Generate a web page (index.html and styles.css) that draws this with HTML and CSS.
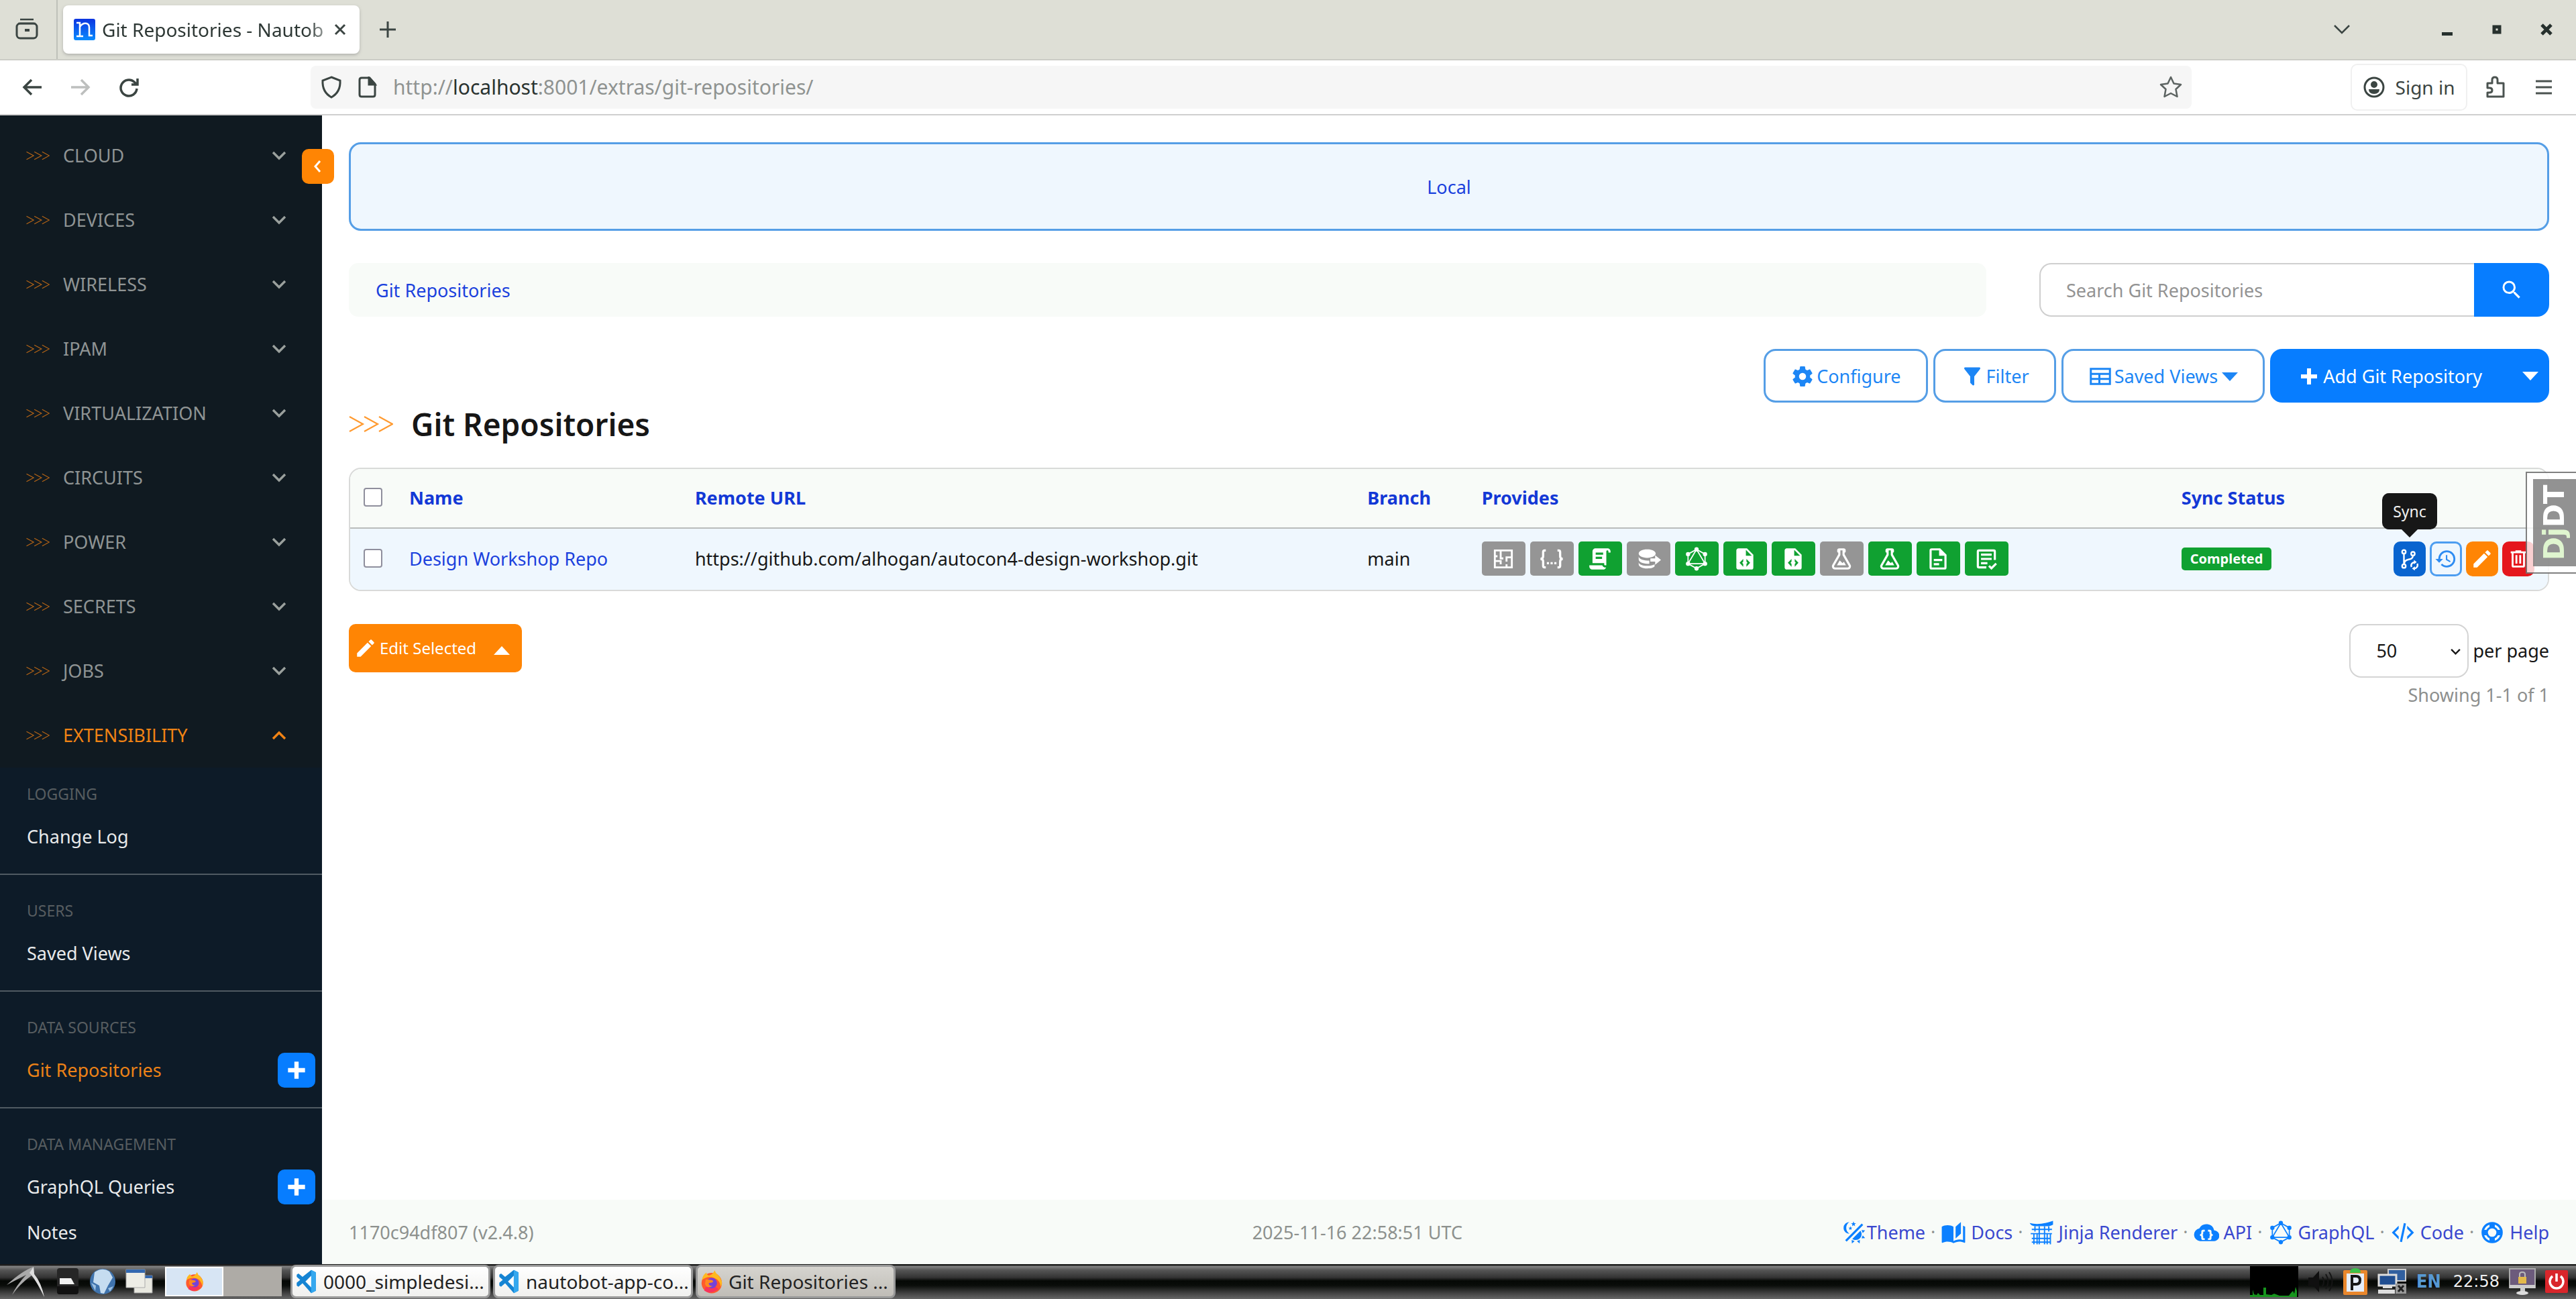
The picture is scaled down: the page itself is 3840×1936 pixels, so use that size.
FILE: index.html
```html
<!DOCTYPE html>
<html lang="en">
<head>
<meta charset="utf-8">
<title>Git Repositories - Nautobot</title>
<link rel="stylesheet" href="styles.css">
</head>
<body>
<svg class="defs" aria-hidden="true">
  <symbol id="chev3" viewBox="0 0 66 26"><path d="M1 2L21 13 1 24M23 2L43 13 23 24M45 2L65 13 45 24" fill="none" stroke="currentColor" stroke-width="2.2"/></symbol>
  <symbol id="down" viewBox="0 0 24 24"><path d="M3 7l9 9 9-9" fill="none" stroke="currentColor" stroke-width="3.4"/></symbol>
  <symbol id="up" viewBox="0 0 24 24"><path d="M3 17l9-9 9 9" fill="none" stroke="currentColor" stroke-width="3.4"/></symbol>
  <symbol id="plus" viewBox="0 0 24 24"><path d="M20 14H14V20H10V14H4V10H10V4H14V10H20V14Z"/></symbol>
  <symbol id="magnify" viewBox="0 0 24 24"><path d="M9.5,3A6.5,6.5 0 0,1 16,9.5C16,11.11 15.41,12.59 14.44,13.73L14.71,14H15.5L20.5,19L19,20.5L14,15.5V14.71L13.73,14.44C12.59,15.41 11.11,16 9.5,16A6.5,6.5 0 0,1 3,9.5A6.5,6.5 0 0,1 9.5,3M9.5,5C7,5 5,7 5,9.5C5,12 7,14 9.5,14C12,14 14,12 14,9.5C14,7 12,5 9.5,5Z"/></symbol>
  <symbol id="cog" viewBox="0 0 24 24"><path d="M12,15.5A3.5,3.5 0 0,1 8.5,12A3.5,3.5 0 0,1 12,8.5A3.5,3.5 0 0,1 15.5,12A3.5,3.5 0 0,1 12,15.5M19.43,12.97C19.47,12.65 19.5,12.33 19.5,12C19.5,11.67 19.47,11.34 19.43,11L21.54,9.37C21.73,9.22 21.78,8.95 21.66,8.73L19.66,5.27C19.54,5.05 19.27,4.96 19.05,5.05L16.56,6.05C16.04,5.66 15.5,5.32 14.87,5.07L14.5,2.42C14.46,2.18 14.25,2 14,2H10C9.75,2 9.54,2.18 9.5,2.42L9.13,5.07C8.5,5.32 7.96,5.66 7.44,6.05L4.95,5.05C4.73,4.96 4.46,5.05 4.34,5.27L2.34,8.73C2.21,8.95 2.27,9.22 2.46,9.37L4.57,11C4.53,11.34 4.5,11.67 4.5,12C4.5,12.33 4.53,12.65 4.57,12.97L2.46,14.63C2.27,14.78 2.21,15.05 2.34,15.27L4.34,18.73C4.46,18.95 4.73,19.03 4.95,18.95L7.44,17.94C7.96,18.34 8.5,18.68 9.13,18.93L9.5,21.58C9.54,21.82 9.75,22 10,22H14C14.25,22 14.46,21.82 14.5,21.58L14.87,18.93C15.5,18.67 16.04,18.34 16.56,17.94L19.05,18.95C19.27,19.03 19.54,18.95 19.66,18.73L21.66,15.27C21.78,15.05 21.73,14.78 21.54,14.63L19.43,12.97Z"/></symbol>
  <symbol id="filter" viewBox="0 0 24 24"><path d="M14,12V19.88C14.04,20.18 13.94,20.5 13.71,20.71C13.32,21.1 12.69,21.1 12.3,20.71L10.29,18.7C10.06,18.47 9.96,18.16 10,17.87V12H9.97L4.21,4.62C3.87,4.19 3.95,3.56 4.38,3.22C4.57,3.08 4.78,3 5,3V3H19V3C19.22,3 19.43,3.08 19.62,3.22C20.05,3.56 20.13,4.19 19.79,4.62L14.03,12H14Z"/></symbol>
  <symbol id="views" viewBox="0 0 24 24"><path d="M2.500 4.500h19v15h-19zM2.500 9.500h19M2.500 14.500h19M11 9.500v10" fill="none" stroke="currentColor" stroke-width="2"/></symbol>
  <symbol id="pencil" viewBox="0 0 24 24"><path d="M20.71,7.04C21.1,6.65 21.1,6 20.71,5.63L18.37,3.29C18,2.9 17.35,2.9 16.96,3.29L15.12,5.12L18.87,8.87M3,17.25V21H6.75L17.81,9.93L14.06,6.18L3,17.25Z"/></symbol>
  <symbol id="trash" viewBox="0 0 24 24"><path d="M9,3V4H4V6H5V19A2,2 0 0,0 7,21H17A2,2 0 0,0 19,19V6H20V4H15V3H9M7,6H17V19H7V6M9,8V17H11V8H9M13,8V17H15V8H13Z"/></symbol>
  <symbol id="history" viewBox="0 0 24 24"><path d="M13.5,8H12V13L16.28,15.54L17,14.33L13.5,12.25V8M13,3A9,9 0 0,0 4,12H1L4.96,16.03L9,12H6A7,7 0 0,1 13,5A7,7 0 0,1 20,12A7,7 0 0,1 13,19C11.07,19 9.32,18.21 8.06,16.94L6.64,18.36C8.27,20 10.5,21 13,21A9,9 0 0,0 22,12A9,9 0 0,0 13,3"/></symbol>
  <symbol id="sync" viewBox="0 0 24 24"><g fill="none" stroke="currentColor" stroke-width="1.700"><circle cx="6" cy="4.500" r="1.900"/><circle cx="6" cy="19.500" r="1.900"/><circle cx="15.500" cy="6.500" r="1.900"/><path d="M6 6.500v11M15.500 8.500c0 3-2 3.500-4.500 4S6.500 14 6.300 17"/><path d="M14 20.500a3.500 3.500 0 0 1 3.500-5M20 17a3.500 3.500 0 0 1-3.500 5"/></g><path d="M16.500 13l3 2.300-3 2.300zM17.500 24.300l-3-2.300 3-2.300z"/></symbol>
  <symbol id="floor" viewBox="0 0 24 24"><path d="M4 4h16v16H4zM4 9.500h2.500M9.500 4v7.500H12M4 14h5.500v3M9.500 19.500V20M15 20v-3M15 14.500v-4h5" fill="none" stroke="currentColor" stroke-width="1.800"/></symbol>
  <symbol id="json" viewBox="0 0 24 24"><path d="M6.500 4H5.500Q4 4 4 5.500V9.500Q4 12 1.500 12Q4 12 4 14.500V18.500Q4 20 5.500 20H6.500M17.500 4H18.500Q20 4 20 5.500V9.500Q20 12 22.500 12Q20 12 20 14.500V18.500Q20 20 18.500 20H17.500" fill="none" stroke="currentColor" stroke-width="2.100"/><path d="M7.500 15h2v2h-2zM11 15h2v2h-2zM14.500 15h2v2h-2z"/></symbol>
  <symbol id="script" viewBox="0 0 24 24"><path d="M17.8,20C17.4,21.2 16.3,22 15,22H5C3.3,22 2,20.7 2,19V18H5L14.2,18C14.6,19.2 15.7,20 17,20H17.8M19,2C20.7,2 22,3.3 22,5V6H20V5C20,4.400 19.6,4 19,4C18.4,4 18,4.400 18,5V18H17C16.4,18 16,17.6 16,17V16H5V5C5,3.3 6.3,2 8,2H19M8,6V8H15V6H8M8,10V12H14V10H8Z"/></symbol>
  <symbol id="database" viewBox="0 0 24 24"><path d="M11 3c-4.500 0-8 1.700-8 4s3.500 4 8 4 8-1.700 8-4-3.500-4-8-4zM3 9.500v3c0 2.200 3.500 4 8 4h2v-3h-2c-4.500 0-8-1.800-8-4zM3 15v2c0 2.200 3.500 4 8 4s6-.8 7-2v-2c-1.500 1-4 1.500-7 1.500-4.500 0-8-1.300-8-3.500zM18.500 8.500L24 13l-5.500 4.500V14.500H14v-3h4.500z"/></symbol>
  <symbol id="graphql" viewBox="0 0 24 24"><path d="M12 3l8 4.500v9L12 21l-8-4.500v-9zM12 3L4 16.500h16z" fill="none" stroke="currentColor" stroke-width="1.100"/><circle cx="12" cy="3" r="2"/><circle cx="20" cy="7.500" r="2"/><circle cx="20" cy="16.500" r="2"/><circle cx="12" cy="21" r="2"/><circle cx="4" cy="16.500" r="2"/><circle cx="4" cy="7.500" r="2"/></symbol>
  <symbol id="filecode" viewBox="0 0 24 24"><path d="M13,9H18.5L13,3.5V9M6,2H14L20,8V20A2,2 0 0,1 18,22H6C4.890,22 4,21.1 4,20V4C4,2.890 4.890,2 6,2M10.500,12L7,15.700L10.500,19.400V16.800L9.500,15.700L10.500,14.600V12M13.500,12V14.600L14.500,15.700L13.500,16.800V19.400L17,15.700L13.500,12Z"/></symbol>
  <symbol id="flask" viewBox="0 0 24 24"><path d="M5,19A1,1 0 0,0 6,20H18A1,1 0 0,0 19,19C19,18.79 18.93,18.59 18.82,18.43L13,8.35V4H11V8.35L5.18,18.43C5.07,18.59 5,18.79 5,19M6,22A3,3 0 0,1 3,19C3,18.4 3.18,17.84 3.5,17.37L9,7.81V6A1,1 0 0,1 8,5V4A2,2 0 0,1 10,2H14A2,2 0 0,1 16,4V5A1,1 0 0,1 15,6V7.81L20.5,17.37C20.82,17.84 21,18.4 21,19A3,3 0 0,1 18,22H6M13,16L14.34,14.66L16.27,18H7.73L10.39,13.39L13,16Z"/></symbol>
  <symbol id="doc" viewBox="0 0 24 24"><path d="M6,2A2,2 0 0,0 4,4V20A2,2 0 0,0 6,22H18A2,2 0 0,0 20,20V8L14,2H6M6,4H13V9H18V20H6V4M8,12V14H16V12H8M8,16V18H13V16H8Z"/></symbol>
  <symbol id="check" viewBox="0 0 24 24"><path d="M12 20H5q-1 0-1-1V5q0-1 1-1h14q1 0 1 1v8M7 8h10M7 12h10M7 16h6M14.500 18.500l2.300 2.300 4.500-4.500" fill="none" stroke="currentColor" stroke-width="2"/></symbol>
  <symbol id="theme" viewBox="0 0 24 24"><path d="M7.5,2C5.71,3.15 4.5,5.18 4.5,7.5C4.5,9.82 5.71,11.85 7.53,13C4.46,13 2,10.54 2,7.5A5.5,5.5 0 0,1 7.5,2M19.07,3.5L20.5,4.93L4.93,20.5L3.5,19.07L19.07,3.5M12.89,5.93L11.41,5L9.97,6L10.39,4.3L9,3.24L10.75,3.12L11.33,1.47L12,3.1L13.73,3.13L12.38,4.26L12.89,5.93M9.59,9.54L8.43,8.81L7.31,9.59L7.65,8.27L6.56,7.44L7.92,7.35L8.37,6.06L8.88,7.33L10.24,7.36L9.19,8.23L9.59,9.54M19,13.5A5.5,5.5 0 0,1 13.5,19C12.28,19 11.15,18.6 10.24,17.93L17.93,10.24C18.6,11.15 19,12.28 19,13.5M14.6,20.08L17.37,18.93L17.13,22.28L14.6,20.08M18.93,17.38L20.08,14.61L22.28,17.15L18.93,17.38M20.08,12.42L18.94,9.64L22.28,9.88L20.08,12.42M9.63,18.93L12.4,20.08L9.87,22.27L9.63,18.93Z"/></symbol>
  <symbol id="book" viewBox="0 0 24 24"><path d="M19 2L14 6.5V17.5L19 13V2M6.5 5C4.55 5 2.45 5.4 1 6.5V21.16C1 21.41 1.25 21.66 1.5 21.66C1.6 21.66 1.65 21.59 1.75 21.59C3.1 20.94 5.05 20.5 6.5 20.5C8.45 20.5 10.55 20.9 12 22C13.35 21.15 15.8 20.5 17.5 20.5C19.15 20.5 20.85 20.81 22.25 21.56C22.35 21.61 22.4 21.59 22.5 21.59C22.75 21.59 23 21.34 23 21.09V6.5C22.4 6.05 21.75 5.75 21 5.5V19C19.9 18.65 18.7 18.5 17.5 18.5C15.8 18.5 13.35 19.15 12 20V6.5C10.55 5.4 8.45 5 6.5 5Z"/></symbol>
  <symbol id="jinja" viewBox="0 0 24 24"><path d="M1 3q9 2.500 22-2v3.500q-2 1.200-5 1.500H6Q2.500 5.800 1 3z"/><path d="M3 9h19M6 6v5M10 6v17M15 6v17M19 6v5M2 13h20M5 13v10M8 13v10M17.500 13v10M20.500 13v10M3 17.500h18M3 21h18" fill="none" stroke="currentColor" stroke-width="1.200"/></symbol>
  <symbol id="api" viewBox="0 0 24 24"><path d="M19.350 10A7.500 7.500 0 0 0 5.400 8.100 6 6 0 0 0 6 20H19a5 5 0 0 0 .350-10zM10.500 11H9.700q-.7 0-.7.800v1.400q0 1-1 1 1 0 1 1v1.300q0 .8.700.8h.8v1.700H9q-1.800 0-1.800-1.800v-1.200q0-1-1.200-1v-1.500q1.200 0 1.200-1.100v-1.200Q7.200 9.300 9 9.300h1.500zM18 15q-1.200 0-1.200 1v1.200q0 1.800-1.800 1.800h-1.500v-1.700h.8q.7 0 .7-.8v-1.300q0-1 1-1-1 0-1-1v-1.400q0-.8-.7-.8h-.8V9.300H15q1.800 0 1.800 1.800v1.200q0 1.200 1.200 1.200z" fill-rule="evenodd"/></symbol>
  <symbol id="xml" viewBox="0 0 24 24"><path d="M12.890,3L14.85,3.4L11.11,21L9.15,20.6L12.890,3M19.59,12L16,8.41V5.58L22.42,12L16,18.41V15.58L19.59,12M1.58,12L8,5.58V8.41L4.41,12L8,15.58V18.41L1.58,12Z"/></symbol>
  <symbol id="help" viewBox="0 0 24 24"><path d="M12 2a10 10 0 1 0 0 20 10 10 0 0 0 0-20zm0 6a4 4 0 1 1 0 8 4 4 0 0 1 0-8zM9.500 4.500v2.100a6 6 0 0 0-2.900 2.900H4.500a8 8 0 0 1 5-5zm5 0a8 8 0 0 1 5 5h-2.100a6 6 0 0 0-2.900-2.900zM4.500 14.500h2.100a6 6 0 0 0 2.900 2.900v2.100a8 8 0 0 1-5-5zm12.900 0h2.100a8 8 0 0 1-5 5v-2.100a6 6 0 0 0 2.900-2.900z" fill-rule="evenodd"/></symbol>
  <symbol id="vscode" viewBox="0 0 36 44"><path d="M26 2l8 4v32l-8 4-15-17-7 6-3-2v-5l6-5L1 14v-4l3-2 7 6z" fill="#1584d3"/><path d="M26 12v20L16 22z" fill="#fff"/><path d="M26 2l8 4v32l-8 4z" fill="#35a8ef"/></symbol>
  <symbol id="firefox" viewBox="0 0 32 32"><circle cx="16" cy="18" r="13.500" fill="#ff5a2c"/><path d="M3 14Q4 7 9 4q0 3 3 4 5-1 8-7 1 4 5 7 7 8 3 15-1-9-9-12-9-3-16 3z" fill="#ffb81f"/><path d="M6 28q9 6 19-2l-4-3H8z" fill="#f7335d"/><circle cx="16" cy="18" r="7" fill="#7542d8"/><path d="M8 13l8 1q3 1 1 3l-5 1q0 4 5 4-7 4-10-3z" fill="#ff8a1f"/></symbol>
</svg>

<header class="chrome">
  <div class="tabs">
    <button class="cell history-view" aria-label="View recent"><svg width="36" height="36" viewBox="0 0 36 36" fill="none" stroke="#3b4542" stroke-width="3"><path d="M8 3h20M5 9h26" stroke-width="2.500"/><rect x="3" y="9" width="30" height="22" rx="5"/><path d="M15 17h7v4h-7z" fill="#3b4542" stroke="none"/></svg></button>
    <div class="tab"><svg width="32" height="32" viewBox="0 0 32 32"><defs><linearGradient id="nb" x2="0" y2="1"><stop stop-color="#0c34e0"/><stop offset="1" stop-color="#0a8cff"/></linearGradient></defs><rect width="32" height="32" rx="3" fill="url(#nb)"/><path d="M4 6h5v20M4 26h10M9 12q4-6 10-5 4 1 4 6v12h5" fill="none" stroke="#fff" stroke-width="2.500"/></svg><span class="tab-title">Git Repositories - Nautob</span><button class="cell tab-close" aria-label="Close tab"><svg width="18" height="18" viewBox="0 0 18 18"><path d="M2 2l14 14M16 2L2 16" stroke="#3b4542" stroke-width="3"/></svg></button></div>
    <button class="cell new-tab" aria-label="New tab"><svg width="24" height="24" viewBox="0 0 24 24"><path d="M12 0v24M0 12h24" stroke="#3b4542" stroke-width="3"/></svg></button>
    <div class="window-buttons">
      <button class="cell wide" aria-label="List tabs"><svg width="26" height="26" viewBox="0 0 26 26"><path d="M2 7l11 11L24 7" fill="none" stroke="#3b4542" stroke-width="2.500"/></svg></button>
      <button class="cell" aria-label="Minimize"><svg width="18" height="18" viewBox="0 0 18 18"><path d="M1 13h16v5H1z" fill="#26302d"/></svg></button>
      <button class="cell" aria-label="Maximize"><svg width="14" height="14" viewBox="0 0 14 14"><path d="M3 3h8v8H3z" fill="none" stroke="#26302d" stroke-width="5"/></svg></button>
      <button class="cell" aria-label="Close"><svg width="18" height="18" viewBox="0 0 18 18"><path d="M2 2l14 14M16 2L2 16" stroke="#26302d" stroke-width="5"/></svg></button>
    </div>
  </div>
  <div class="toolbar">
    <div class="nav">
      <button class="cell" aria-label="Back"><svg width="30" height="30" viewBox="0 0 30 30" fill="none" stroke="#3b4542" stroke-width="3.500"><path d="M29 15H3M14 4L3 15l11 11"/></svg></button>
      <button class="cell" aria-label="Forward"><svg width="30" height="30" viewBox="0 0 30 30" fill="none" stroke="#bdbfbe" stroke-width="3.500"><path d="M1 15h26M16 4l11 11-11 11"/></svg></button>
      <button class="cell" aria-label="Reload"><svg width="32" height="32" viewBox="0 0 32 32" fill="none" stroke="#3b4542" stroke-width="3.500"><path d="M28 18a12 12 0 1 1-4-10l4 4M29 3v9h-9"/></svg></button>
    </div>
    <div class="urlbar">
      <svg width="32" height="34" viewBox="0 0 32 34" fill="none" stroke="#3b4542" stroke-width="3"><path d="M16 2L29 7q1 17-13 25Q2 24 3 7z"/></svg>
      <svg width="28" height="32" viewBox="0 0 28 32" fill="none" stroke="#3b4542" stroke-width="3"><path d="M5 2h12l8 9v16q0 3-3 3H5q-3 0-3-3V5q0-3 3-3z"/><path d="M16 2v10h9z" fill="#3b4542"/></svg>
      <span class="url">http://<b>localhost</b>:8001/extras/git-repositories/</span>
      <svg width="34" height="34" viewBox="0 0 34 34" fill="none" stroke="#5c6361" stroke-width="2.500"><path d="M17 2l4.500 9.500L32 13l-7.500 7 2 11-9.500-5-9.500 5 2-11L2 13l10.500-1.500z" stroke-linejoin="round"/></svg>
    </div>
    <div class="actions-bar">
      <button class="signin"><svg width="32" height="32" viewBox="0 0 32 32"><circle cx="16" cy="16" r="14" fill="none" stroke="#3b4542" stroke-width="3"/><circle cx="16" cy="12" r="5" fill="#3b4542"/><path d="M8 19h16q0 7-8 7t-8-7z" fill="#3b4542"/></svg>Sign in</button>
      <button class="cell ext" aria-label="Extensions"><svg width="28" height="34" viewBox="0 0 28 34" fill="none" stroke="#4b5350" stroke-width="3"><path d="M2 11h7V6q0-4 4-4t4 4v5h9v20H2v-6h3q4 0 4-3.500T5 18H2z" stroke-linejoin="round"/></svg></button>
      <button class="cell menu" aria-label="Menu"><svg width="26" height="22" viewBox="0 0 26 22"><path d="M1 2h24M1 11h24M1 20h24" stroke="#4b5350" stroke-width="3"/></svg></button>
    </div>
  </div>
</header>

<div class="app">
  <nav class="sidebar">
    <button class="collapse" aria-label="Collapse menu"><svg width="20" height="20" viewBox="0 0 20 20"><path d="M13 2L6 10l7 8" fill="none" stroke="#fff" stroke-width="3"/></svg></button>
    <button class="section"><svg class="arrows"><use href="#chev3"/></svg>CLOUD<svg class="caret"><use href="#down"/></svg></button>
    <button class="section"><svg class="arrows"><use href="#chev3"/></svg>DEVICES<svg class="caret"><use href="#down"/></svg></button>
    <button class="section"><svg class="arrows"><use href="#chev3"/></svg>WIRELESS<svg class="caret"><use href="#down"/></svg></button>
    <button class="section"><svg class="arrows"><use href="#chev3"/></svg>IPAM<svg class="caret"><use href="#down"/></svg></button>
    <button class="section"><svg class="arrows"><use href="#chev3"/></svg>VIRTUALIZATION<svg class="caret"><use href="#down"/></svg></button>
    <button class="section"><svg class="arrows"><use href="#chev3"/></svg>CIRCUITS<svg class="caret"><use href="#down"/></svg></button>
    <button class="section"><svg class="arrows"><use href="#chev3"/></svg>POWER<svg class="caret"><use href="#down"/></svg></button>
    <button class="section"><svg class="arrows"><use href="#chev3"/></svg>SECRETS<svg class="caret"><use href="#down"/></svg></button>
    <button class="section"><svg class="arrows"><use href="#chev3"/></svg>JOBS<svg class="caret"><use href="#down"/></svg></button>
    <button class="section open"><svg class="arrows"><use href="#chev3"/></svg>EXTENSIBILITY<svg class="caret"><use href="#up"/></svg></button>
    <div class="groups">
      <div class="group"><h2>LOGGING</h2><div class="item"><a href="#">Change Log</a></div></div>
      <div class="group"><h2>USERS</h2><div class="item"><a href="#">Saved Views</a></div></div>
      <div class="group"><h2>DATA SOURCES</h2><div class="item"><a class="current" href="#">Git Repositories</a><button class="add" aria-label="Add Git repository"><svg><use href="#plus"/></svg></button></div></div>
      <div class="group"><h2>DATA MANAGEMENT</h2><div class="item"><a href="#">GraphQL Queries</a><button class="add" aria-label="Add GraphQL query"><svg><use href="#plus"/></svg></button></div><div class="item"><a href="#">Notes</a></div></div>
    </div>
  </nav>

  <main>
    <div class="banner">Local</div>
    <div class="crumb-row">
      <div class="crumbs"><a href="#">Git Repositories</a></div>
      <form class="search"><input type="text" aria-label="Search Git Repositories" placeholder="Search Git Repositories"><button type="button" aria-label="Search"><svg><use href="#magnify"/></svg></button></form>
    </div>
    <div class="buttons">
      <button class="btn"><svg><use href="#cog"/></svg>Configure</button>
      <button class="btn"><svg><use href="#filter"/></svg>Filter</button>
      <button class="btn"><svg><use href="#views"/></svg>Saved Views<i class="tri"></i></button>
      <div class="split"><button class="btn solid"><svg><use href="#plus"/></svg>Add Git Repository</button><button class="more" aria-label="More"><i class="tri"></i></button></div>
    </div>
    <h1><svg><use href="#chev3"/></svg>Git Repositories</h1>

    <div class="panel">
      <table>
        <colgroup><col class="c-check"><col class="c-name"><col class="c-url"><col class="c-branch"><col class="c-provides"><col></colgroup>
        <thead><tr><th><input type="checkbox" aria-label="Select all"></th><th><a href="#">Name</a></th><th><a href="#">Remote URL</a></th><th><a href="#">Branch</a></th><th><a href="#">Provides</a></th><th><a href="#">Sync Status</a></th></tr></thead>
        <tbody><tr>
          <td><input type="checkbox" aria-label="Select Design Workshop Repo"></td>
          <td><a href="#">Design Workshop Repo</a></td>
          <td>https://github.com/alhogan/autocon4-design-workshop.git</td>
          <td>main</td>
          <td><div class="chips">
            <span class="chip off"><svg><use href="#floor"/></svg></span><span class="chip off"><svg><use href="#json"/></svg></span><span class="chip"><svg><use href="#script"/></svg></span><span class="chip off"><svg><use href="#database"/></svg></span><span class="chip"><svg><use href="#graphql"/></svg></span><span class="chip"><svg><use href="#filecode"/></svg></span><span class="chip"><svg><use href="#filecode"/></svg></span><span class="chip off"><svg><use href="#flask"/></svg></span><span class="chip"><svg><use href="#flask"/></svg></span><span class="chip"><svg><use href="#doc"/></svg></span><span class="chip"><svg><use href="#check"/></svg></span>
          </div></td>
          <td><div class="status"><span class="badge">Completed</span>
            <div class="row-actions">
              <span class="tip-anchor"><span class="tooltip" role="tooltip">Sync</span><button class="act sync" aria-label="Sync"><svg><use href="#sync"/></svg></button></span>
              <button class="act log" aria-label="Change log"><svg><use href="#history"/></svg></button>
              <button class="act edit" aria-label="Edit"><svg><use href="#pencil"/></svg></button>
              <button class="act delete" aria-label="Delete"><svg><use href="#trash"/></svg></button>
            </div></div></td>
        </tr></tbody>
      </table>
    </div>

    <div class="below">
      <button class="edit-selected"><svg><use href="#pencil"/></svg>Edit Selected<i class="tri-up"></i></button>
      <div class="paging">
        <div class="per-page"><span class="select-wrap"><select id="per-page"><option>50</option></select><svg><use href="#down"/></svg></span><label for="per-page">per page</label></div>
        <div class="showing">Showing 1-1 of 1</div>
      </div>
    </div>

    <footer>
      <span>1170c94df807 (v2.4.8)</span>
      <span class="date">2025-11-16 22:58:51 UTC</span>
      <div class="links">
        <a class="tight" href="#"><svg><use href="#theme"/></svg>Theme</a><span>·</span><a href="#"><svg><use href="#book"/></svg>Docs</a><span>·</span><a href="#"><svg><use href="#jinja"/></svg>Jinja Renderer</a><span>·</span><a href="#"><svg><use href="#api"/></svg>API</a><span>·</span><a href="#"><svg><use href="#graphql"/></svg>GraphQL</a><span>·</span><a href="#"><svg><use href="#xml"/></svg>Code</a><span>·</span><a href="#"><svg><use href="#help"/></svg>Help</a>
      </div>
    </footer>
  </main>
  <button class="djdt"><span class="djdt-text"><b>Dj</b>DT</span></button>
</div>

<div class="taskbar">
  <div class="launchers">
    <svg width="60" height="48" viewBox="0 0 60 48"><path d="M1 29Q24 8 41 2l1 11q10 12 15 34Q46 24 38 15 20 28 9 44 15 30 30 14 16 21 1 29z" fill="#aaa"/><path d="M41 2l1 11q10 12 15 34Q44 20 35 11z" fill="#dedede"/></svg>
    <svg width="36" height="40" viewBox="0 0 36 40"><rect x="2" y="0" width="32" height="39" rx="4" fill="#262626"/><path d="M6 15h17l5 9H6z" fill="#f1f1f1"/><path d="M2 27h32v8q0 4-4 4H6q-4 0-4-4z" fill="#111"/></svg>
    <svg width="40" height="40" viewBox="0 0 40 40"><circle cx="20" cy="20" r="19" fill="#3f73ad"/><path d="M8 6q12-8 22-1l5 9-7 12-6 12-5-1-2-11-9-5z" fill="#c5dcf0"/><path d="M3 22l7 4-1 8zM28 30l8-3-5 8z" fill="#9cc0e2"/></svg>
    <svg width="42" height="38" viewBox="0 0 42 38"><path d="M13 10h27v26H13z" fill="#e8e8e0" stroke="#999"/><path d="M13 10h27v4H13z" fill="#3468b0"/><path d="M1 1h28v27H1z" fill="#ededE6" stroke="#aaa"/><path d="M1 1h28v5H1z" fill="#3468b0"/></svg>
  </div>
  <div class="pager"><span class="desk active"><svg width="30" height="30"><use href="#firefox"/></svg></span><span class="desk"></span></div>
  <div class="tasks">
    <button class="task"><svg width="36" height="38"><use href="#vscode"/></svg>0000_simpledesi...</button>
    <button class="task"><svg width="36" height="38"><use href="#vscode"/></svg>nautobot-app-co...</button>
    <button class="task current"><svg width="36" height="38"><use href="#firefox"/></svg>Git Repositories ...</button>
  </div>
  <div class="tray">
    <svg width="72" height="46" viewBox="0 0 72 46"><path d="M0 0h72v46H0z" fill="#000"/><path d="M0 46v-3h4v-8l2 7 4 1 2-3 3 3h5V32h4v10l8 1 4-2 8 3h14l3-4 3-3 2 4 2-10 2 6v9z" fill="#16951d"/></svg>
    <svg width="38" height="34" viewBox="0 0 38 34"><path d="M1 11h7l9-10v32L8 23H1z" fill="#101010"/><path d="M22 10q4 7 0 14M27 6q7 11 0 22M32 3q9 14 0 28" fill="none" stroke="#151515" stroke-width="2"/></svg>
    <svg width="38" height="42" viewBox="0 0 38 42"><rect x="1" y="4" width="36" height="37" rx="2" fill="#e9872c"/><path d="M6 9h26v27H6z" fill="#e5eefc"/><path d="M11 8q0-7 8-7t8 7z" fill="#3cc24a"/><path d="M14 34V13h6q6 0 6 6t-6 6h-6" fill="none" stroke="#171717" stroke-width="4"/></svg>
    <svg width="44" height="38" viewBox="0 0 44 38"><path d="M16 1h26v17H16z" fill="#315f9f" stroke="#ccc" stroke-width="2"/><path d="M2 9h26v16H2z" fill="#204e91" stroke="#ddd" stroke-width="3"/><path d="M8 25h14v4H8zM1 31h25v6H1z" fill="#ddd"/><path d="M27 22h16v15H27z" fill="#999"/><path d="M31 25l8 9M39 25l-8 9" stroke="#222" stroke-width="3"/></svg>
    <span class="lang">EN</span>
    <span class="clock">22:58</span>
    <svg width="40" height="42" viewBox="0 0 40 42"><path d="M1 2h38v28H1z" fill="#6c5b7c" stroke="#aaa" stroke-width="2"/><path d="M1 26h38v5H1zM17 31h7v5h-7z" fill="#ccc"/><ellipse cx="20" cy="38" rx="9" ry="3" fill="#ddd"/><path d="M14 14h12v10H14z" fill="#e3b94a"/><path d="M16 14v-4q0-3 4-3t4 3v4" fill="none" stroke="#bbb" stroke-width="2"/></svg>
    <svg width="34" height="34" viewBox="0 0 34 34"><rect width="34" height="34" rx="2" fill="#d9262b"/><path d="M11 9a10 10 0 1 0 12 0M17 5v12" fill="none" stroke="#fff" stroke-width="3.500"/></svg>
  </div>
</div>
</body>
</html>
```
FILE: styles.css
```css
* { box-sizing: border-box; }
body { margin: 0; min-height: 100vh; display: flex; flex-direction: column; font-family: "Noto Sans", "Open Sans", sans-serif; font-size: 27px; line-height: 36px; color: #161616; background: #fff; }
button, input, select { font: inherit; color: inherit; margin: 0; }
button { background: none; border: 0; padding: 0; }
a { color: #1b41dd; text-decoration: none; }
svg { flex: none; display: block; }
svg:not([fill]) { fill: currentColor; }
h1, h2 { margin: 0; }
.defs { position: absolute; width: 0; height: 0; }
.cell { display: flex; align-items: center; justify-content: center; }

/* browser chrome */
.tabs { height: 90px; background: #dedfd6; border-bottom: 2px solid #cbccc6; display: flex; align-items: center; font-size: 28px; color: #2e3835; }
.history-view { width: 86px; height: 88px; padding-right: 5px; border-right: 2px solid #bfc1b9; }
.tab { margin-left: 8px; width: 442px; height: 72px; padding: 0 20px 0 16px; border-radius: 8px; background: #fff; box-shadow: 0 2px 4px #8888; display: flex; align-items: center; gap: 10px; }
.tab-title { flex: 1; min-width: 0; white-space: nowrap; -webkit-mask-image: linear-gradient(to right, #000 91%, #0006); mask-image: linear-gradient(to right, #000 91%, #0006); }
.new-tab { width: 84px; }
.window-buttons { margin-left: auto; display: flex; padding-right: 7px; }
.window-buttons .cell { width: 74px; }
.window-buttons .wide { width: 240px; }
.toolbar { height: 82px; border-bottom: 2px solid #cfcfcf; display: grid; grid-template-columns: 463px 1fr 573px; align-items: center; color: #3b4542; }
.nav { display: flex; padding-left: 12px; }
.nav .cell { width: 72px; }
.urlbar { height: 64px; background: #f6f6f6; border-radius: 8px; display: flex; align-items: center; padding: 0 14px 0 15px; gap: 24px; font-size: 30px; }
.url { flex: 1; color: #8f9391; }
.url b { font-weight: 400; color: #2a3330; }
.actions-bar { display: flex; justify-content: flex-end; align-items: center; padding-right: 18px; font-size: 28px; }
.signin { width: 174px; height: 70px; border: 2px solid #f0f0f0; border-radius: 10px; display: flex; align-items: center; justify-content: center; gap: 16px; }
.ext { width: 84px; }
.menu { width: 60px; }

/* layout */
.app { flex: 1; display: grid; grid-template-columns: 480px 1fr; position: relative; }
.sidebar { position: relative; background: #101a21; padding-top: 12px; display: flex; flex-direction: column; }
.collapse { position: absolute; right: -18px; top: 50px; width: 48px; height: 52px; border-radius: 10px; background: #ff8504; display: flex; align-items: center; justify-content: center; }
.section { width: 100%; height: 96px; padding: 0 52px 0 39px; display: flex; align-items: center; text-align: left; color: #8f9494; }
.section .arrows { width: 35px; height: 14px; margin-right: 20px; color: #b86616; }
.section .caret { width: 24px; height: 24px; margin-left: auto; color: #9aa09d; }
.section.open, .section.open .caret { color: #f08314; }
.groups { flex: 1; background: #0d1b28; }
.group { padding: 35px 20px 21px 40px; border-bottom: 2px solid #4f5a62; }
.group:first-child { padding-top: 21px; }
.group:last-child { border: 0; padding-bottom: 0; }
.group h2 { font-size: 23px; font-weight: 400; color: #575d60; margin-bottom: 12px; }
.item { height: 68px; display: flex; align-items: center; justify-content: space-between; margin-right: -10px; }
.item a { color: #e8eaeb; }
.item a.current { color: #ec8217; }
.add { width: 56px; height: 52px; border-radius: 10px; background: #077dff; color: #fff; display: flex; align-items: center; justify-content: center; }
.add svg { width: 38px; height: 38px; }

main { min-width: 0; padding: 40px 40px 0; display: flex; flex-direction: column; }
.banner { height: 132px; padding-top: 2px; border: 3px solid #559ee6; border-radius: 18px; background: #eff7fe; color: #1b41dd; display: flex; align-items: center; justify-content: center; }
.crumb-row { display: flex; margin-top: 48px; height: 80px; gap: 79px; }
.crumbs { flex: 1; background: #f8fbf8; border-radius: 14px; padding: 2px 40px 0; display: flex; align-items: center; }
.search { width: 760px; display: flex; }
.search input { flex: 1; min-width: 0; border: 2px solid #cfcfcf; border-right: 0; border-radius: 18px 0 0 18px; padding: 2px 38px 0; background: #fff; }
.search input::placeholder { color: #939393; opacity: 1; }
.search button { width: 112px; background: #077dff; color: #fff; border-radius: 0 18px 18px 0; display: flex; align-items: center; justify-content: center; }
.search svg { width: 36px; height: 36px; }
.buttons { margin-top: 48px; display: flex; justify-content: flex-end; gap: 8px; }
.btn { height: 80px; padding: 2px 37px 0; border: 3px solid #559ee6; border-radius: 18px; background: #fff; color: #1d86f5; display: flex; align-items: center; gap: 3px; }
.btn svg { width: 36px; height: 36px; }
.tri { border: 12px solid transparent; border-top: 13px solid currentColor; border-bottom: 0; margin-left: 3px; }
.split { display: flex; background: #077dff; border-radius: 18px; color: #fff; }
.btn.solid { background: none; border-color: transparent; color: #fff; }
.more { width: 60px; display: flex; align-items: center; justify-content: center; }
h1 { font-size: 46px; line-height: 64px; font-weight: 600; display: flex; align-items: center; gap: 27px; margin-bottom: 33px; }
h1 svg { width: 66px; height: 26px; color: #ff9a30; }

/* table */
.panel { border: 2px solid #d9dad9; border-radius: 18px; overflow: hidden; }
table { width: 100%; table-layout: fixed; border-collapse: separate; border-spacing: 0; }
.c-check { width: 72px; }
.c-name { width: 13%; }
.c-url { width: 30.6%; }
.c-branch { width: 5.2%; }
.c-provides { width: 31.84%; }
th, td { padding: 0 16px 2px; text-align: left; white-space: nowrap; }
th { height: 89px; background: #f8fbf8; border-bottom: 2px solid #b9bcbb; font-weight: 700; }
th a { color: #1338d6; }
td { height: 91px; background: #eff7fe; }
th:first-child, td:first-child { padding: 0 0 4px 20px; }
th:last-child, td:last-child { padding-right: 20px; }
input[type="checkbox"] { appearance: none; display: block; width: 28px; height: 28px; border: 2px solid #8f8f9d; border-radius: 4px; background: #fff; }
.chips { display: flex; gap: 7px; }
.chip { width: 65px; height: 51px; border-radius: 5px; background: #10a131; color: #fff; display: flex; align-items: center; justify-content: center; }
.chip.off { background: #959595; }
.chip svg { width: 38px; height: 38px; }
.status { display: flex; align-items: center; justify-content: space-between; }
.badge { height: 34px; padding: 0 13px; border-radius: 5px; background: #10a131; color: #fff; font-size: 20px; line-height: 33px; font-weight: 700; }
.row-actions { display: flex; gap: 6px; }
.tip-anchor { position: relative; }
.act { width: 48px; height: 52px; border-radius: 10px; color: #fff; display: flex; align-items: center; justify-content: center; }
.act svg { width: 34px; height: 34px; }
.sync { background: #0964cf; }
.log { border: 3px solid #4d9df0; color: #2e8cf2; }
.edit { background: #ff8504; }
.delete { background: #e5171d; }
.tooltip { position: absolute; left: -17px; bottom: 70px; width: 82px; height: 54px; border-radius: 10px; background: #171717; color: #f0f0f0; font-size: 23px; line-height: 54px; text-align: center; }
.tooltip::after { content: ""; position: absolute; top: 54px; left: 29px; border: 12px solid transparent; border-top-color: #171717; border-bottom: 0; }

.below { margin: 49px 0 40px; display: flex; justify-content: space-between; align-items: flex-start; }
.edit-selected { height: 72px; padding: 0 18px 0 8px; border-radius: 10px; background: #ff8504; color: #fff; font-size: 24px; display: flex; align-items: center; gap: 4px; }
.edit-selected svg { width: 34px; height: 34px; }
.tri-up { border: 12px solid transparent; border-bottom: 13px solid currentColor; border-top: 0; margin: 6px 0 0 22px; }
.paging { text-align: right; }
.per-page { display: flex; align-items: center; gap: 6px; }
.select-wrap { position: relative; }
.select-wrap select { appearance: none; display: block; width: 178px; height: 80px; border: 2px solid #d4d4d4; border-radius: 18px; background: #fff; padding: 0 38px; }
.select-wrap svg { position: absolute; right: 11px; top: 33px; width: 17px; height: 17px; pointer-events: none; }
.showing { color: #8d8f8e; line-height: 52px; }

footer { margin: auto -40px 0; padding: 2px 40px 0; height: 96px; background: #f8fbf8; color: #8d918e; display: grid; grid-template-columns: 4fr 3fr 5fr; align-items: center; }
.date { text-align: center; }
.links { display: flex; justify-content: flex-end; gap: 8px; }
.links a { display: flex; align-items: center; gap: 7px; color: #3a48cf; white-space: nowrap; }
.links a.tight { gap: 0; }
.links svg { width: 38px; height: 38px; color: #0c80ff; }

.djdt { position: absolute; right: 0; top: 531px; width: 75px; height: 152px; border: 2px solid #1118; border-right: 0; background: #fffc; padding: 9px 0 9px 9px; display: flex; }
.djdt-text { flex: 1; background: #777c; writing-mode: vertical-rl; transform: rotate(180deg); display: flex; align-items: center; justify-content: center; font-family: "DejaVu Sans", sans-serif; font-weight: 700; font-size: 42px; line-height: 64px; color: #fff; }
.djdt-text b { color: #dff5cf; }

/* desktop panel */
.taskbar { height: 52px; background: linear-gradient(#1c1c1c 0 2px, #858585 3px, #555 9px, #333 20px, #050805 25px, #0a0d0a 32px, #454545 44px, #666 52px); display: flex; align-items: center; color: #222; }
.launchers { display: flex; align-items: center; gap: 14px; padding-left: 9px; width: 246px; }
.pager { display: flex; height: 44px; margin-right: 13px; }
.desk { width: 87px; background: #aeaba6; display: flex; align-items: center; justify-content: center; }
.desk.active { background: #d7e5f4; border: 2px solid #fff; }
.tasks { display: flex; gap: 4px; font-size: 28px; }
.task { width: 298px; height: 50px; border: 3px solid #999; border-radius: 8px; background: linear-gradient(#fff, #f0f0ee); display: flex; align-items: center; gap: 7px; padding: 0 3px; white-space: nowrap; }
.task.current { background: linear-gradient(#d6d4cf, #c0bdb7); }
.tray { margin-left: auto; display: flex; align-items: center; gap: 14px; padding-right: 12px; }
.lang { font-family: "DejaVu Sans Condensed", "DejaVu Sans", sans-serif; font-weight: 700; font-size: 27px; color: #5799d3; }
.clock { font-family: "DejaVu Sans", sans-serif; font-size: 24px; color: #eee; margin-left: 4px; }
```
